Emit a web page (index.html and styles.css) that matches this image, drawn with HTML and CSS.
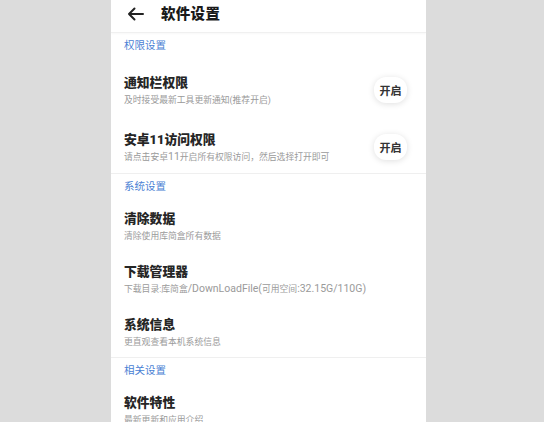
FILE: index.html
```html
<!DOCTYPE html>
<html lang="zh-CN">
<head>
  <meta charset="UTF-8">
  <meta name="viewport" content="width=device-width, initial-scale=1.0">
  <title>软件设置</title>
  <link rel="stylesheet" href="styles.css">
</head>
<body>
  <div class="phone">
    <header class="topbar">
      <svg class="back" width="17" height="14" viewBox="0 0 17 14">
        <path d="M16 7H2M7.5 1.5L2 7l5.5 5.5" fill="none" stroke="#222" stroke-width="2" stroke-linecap="round" stroke-linejoin="round"/>
      </svg>
      <h1 class="title">软件设置</h1>
    </header>

    <section class="group">
      <div class="group-label">权限设置</div>
      <div class="row row-switch">
        <div class="row-text">
          <div class="row-title">通知栏权限</div>
          <div class="row-sub">及时接受最新工具更新通知(推荐开启)</div>
        </div>
        <button class="pill">开启</button>
      </div>
      <div class="row row-switch">
        <div class="row-text">
          <div class="row-title">安卓11访问权限</div>
          <div class="row-sub">请点击安卓<span class="latin">11</span>开启所有权限访问，然后选择打开即可</div>
        </div>
        <button class="pill">开启</button>
      </div>
    </section>

    <section class="group">
      <div class="group-label">系统设置</div>
      <div class="row">
        <div class="row-text">
          <div class="row-title">清除数据</div>
          <div class="row-sub">清除使用库简盒所有数据</div>
        </div>
      </div>
      <div class="row">
        <div class="row-text">
          <div class="row-title">下载管理器</div>
          <div class="row-sub">下载目录:库简盒<span class="latin">/DownLoadFile(</span>可用空间<span class="latin">:32.15G/110G)</span></div>
        </div>
      </div>
      <div class="row">
        <div class="row-text">
          <div class="row-title">系统信息</div>
          <div class="row-sub">更直观查看本机系统信息</div>
        </div>
      </div>
    </section>

    <section class="group">
      <div class="group-label">相关设置</div>
      <div class="row">
        <div class="row-text">
          <div class="row-title">软件特性</div>
          <div class="row-sub">最新更新和应用介绍</div>
        </div>
      </div>
    </section>
  </div>
</body>
</html>
```

FILE: styles.css
```css
body {
  margin: 0;
  padding: 0;
  background-color: #dcdcdc;
  font-family: "Roboto", "Noto Sans CJK SC", sans-serif;
  overflow: hidden;
}

.phone {
  width: 315px;
  height: 422px;
  margin-left: 111px;
  background-color: #fff;
  overflow: hidden;
}

/* top bar */
.topbar {
  height: 32px;
  display: flex;
  align-items: center;
  padding-left: 16px;
  border-bottom: 1px solid #f0f0f0;
  box-shadow: 0 1px 2px rgba(0, 0, 0, 0.03);
}

.back {
  margin-right: 17px;
  margin-top: -4px;
}

.title {
  margin: 0 0 7px;
  font-size: 14.5px;
  font-weight: 900;
  color: #1a1a1a;
  letter-spacing: 0.3px;
}

/* groups */
.group + .group {
  border-top: 1px solid #efefef;
}

.group-label {
  height: 26px;
  line-height: 26px;
  padding-left: 13px;
  font-size: 10.5px;
  color: #4a7fd4;
}

.row {
  display: flex;
  align-items: center;
  padding: 10px 19px 9px 13px;
}

.row:last-child {
  padding-bottom: 7px;
}

.row.row-switch {
  padding-top: 15px;
  padding-bottom: 8px;
}

.row-text {
  flex: 1;
}

.row-title {
  font-size: 12.8px;
  line-height: 18px;
  font-weight: 900;
  color: #262626;
}

.row-sub {
  font-size: 8.8px;
  line-height: 16px;
  color: #9a9a9a;
}

.row-sub .latin {
  font-size: 10.5px;
}

.pill {
  width: 33px;
  height: 26px;
  padding: 0;
  border: none;
  border-radius: 12px;
  background-color: #fff;
  box-shadow: 0 1px 6px rgba(0, 0, 0, 0.13);
  font-family: inherit;
  font-size: 11px;
  font-weight: 700;
  color: #333;
  margin-top: -3px;
}
```
